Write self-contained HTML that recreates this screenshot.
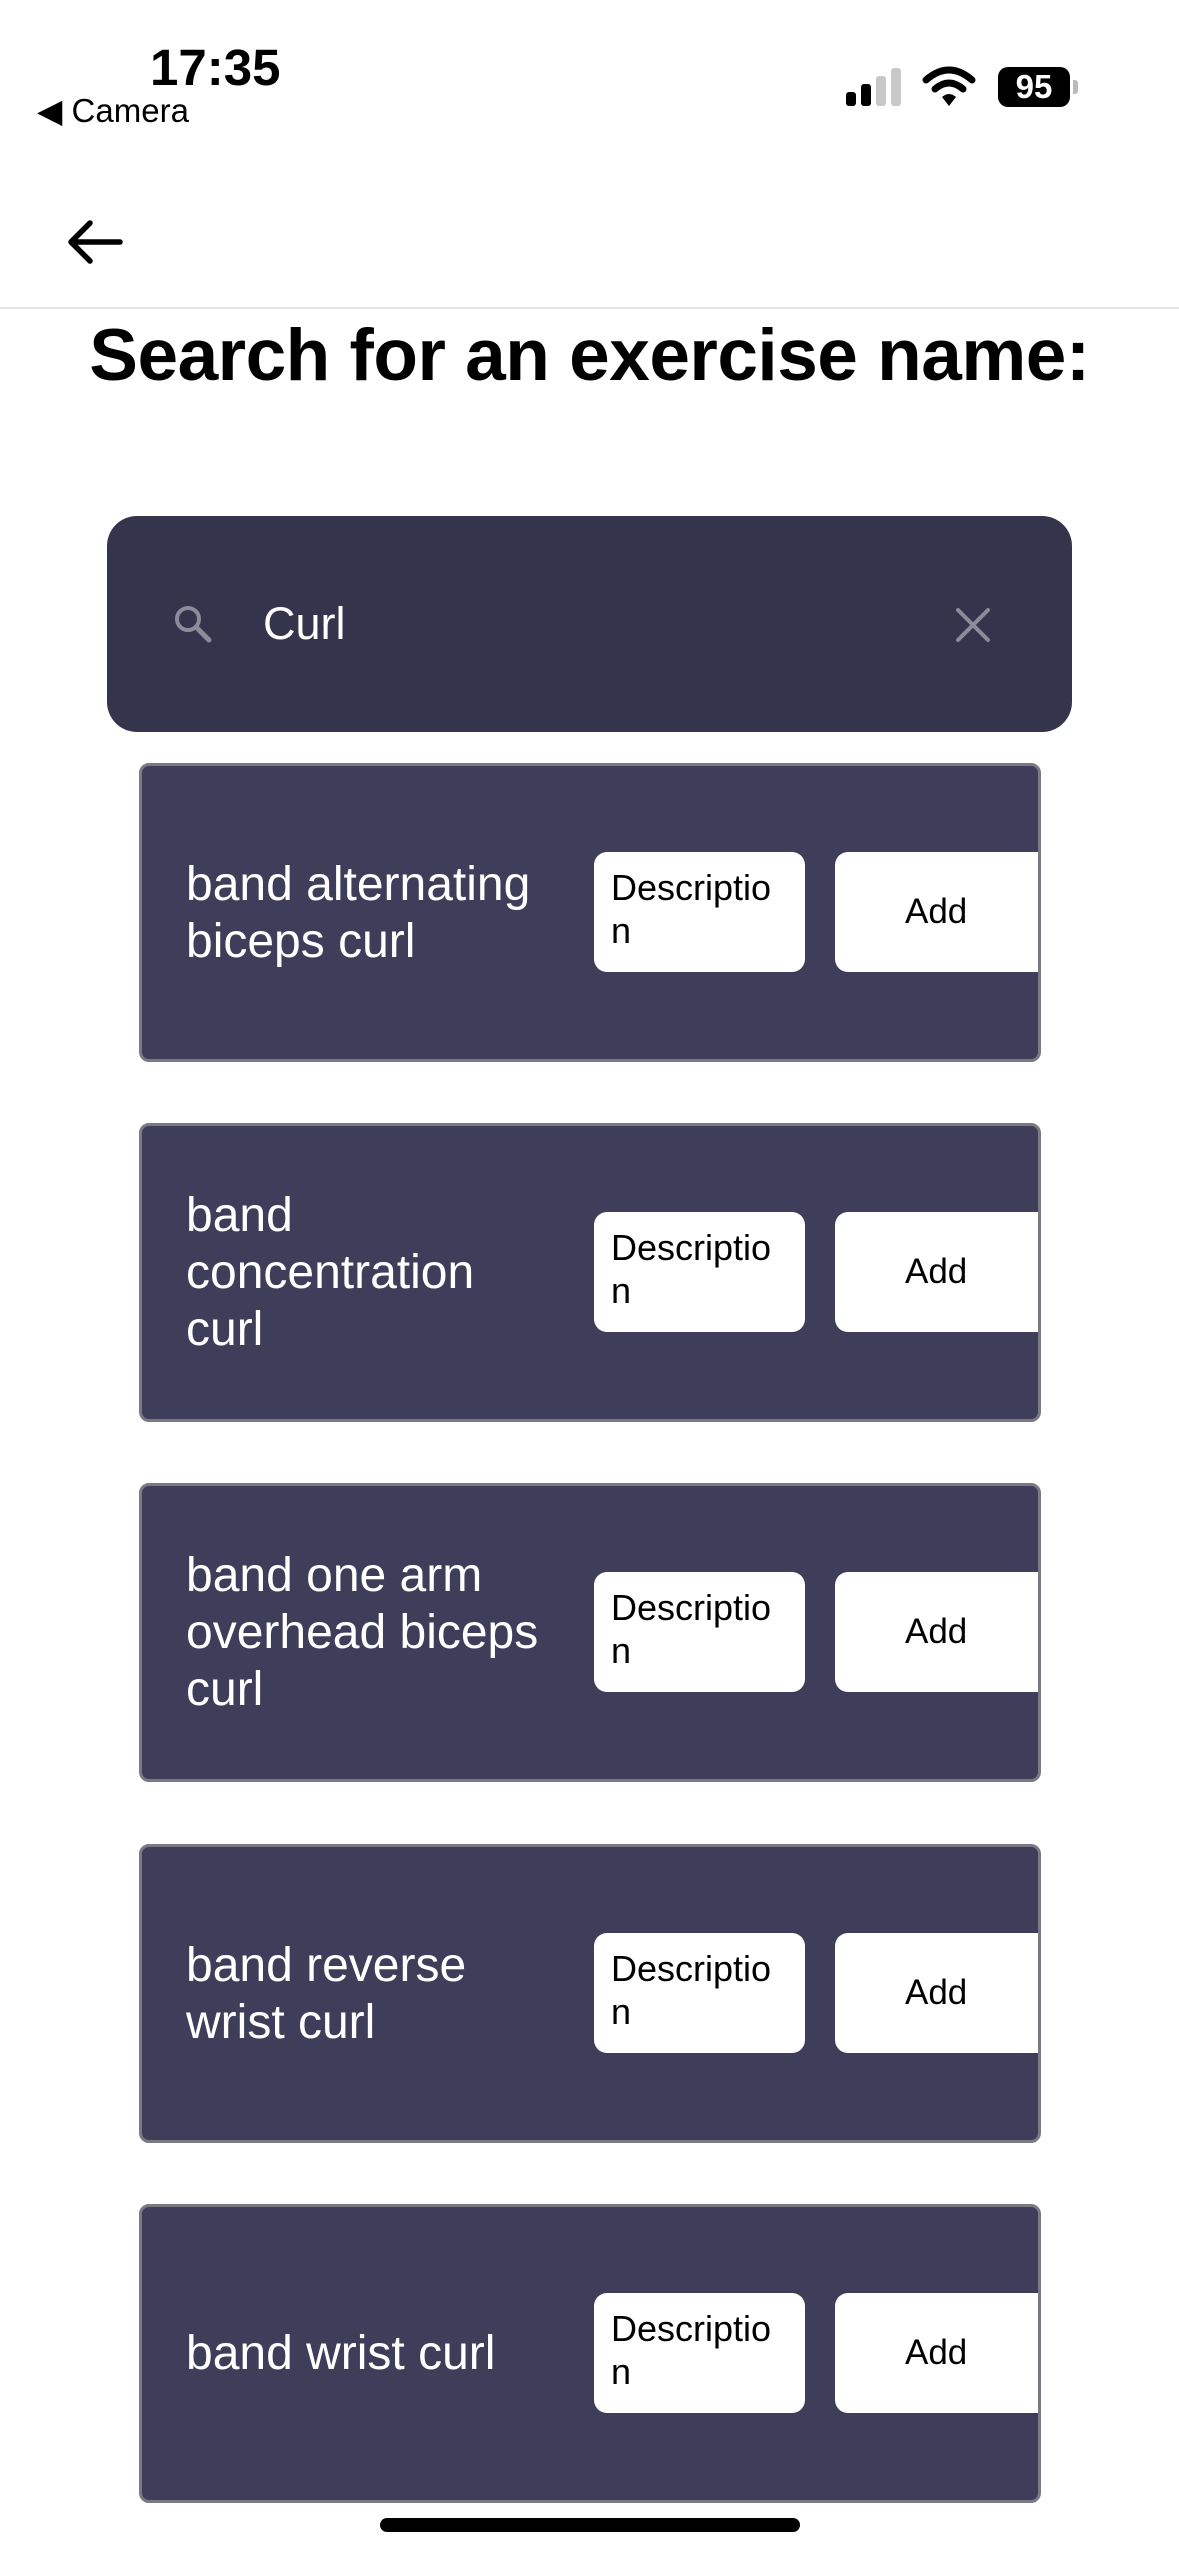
<!DOCTYPE html>
<html><head><meta charset="utf-8"><style>
*{margin:0;padding:0;box-sizing:border-box}
body{width:1179px;height:2556px;background:#fff;font-family:"Liberation Sans",sans-serif;position:relative;overflow:hidden}
.a{position:absolute}
.card{position:absolute;left:139px;width:902px;height:299px;background:#3f3e5a;border:3px solid #7a7a84;border-radius:10px;overflow:hidden}
.name{position:absolute;left:44px;top:0;height:293px;display:flex;align-items:center;color:#fff;font-size:48px;line-height:57px}
.desc{position:absolute;left:452px;top:86px;width:211px;height:120px;background:#fff;border-radius:13px;color:#000;font-size:36px;line-height:43px;padding:14px 0 0 17px}
.add{position:absolute;left:693px;top:86px;width:220px;height:120px;background:#fff;border-radius:13px;color:#000;font-size:35px;line-height:120px;padding-left:70px}
</style></head><body>
<div class="a" style="left:150px;top:38px;font-size:51px;font-weight:bold;color:#000">17:35</div>
<div class="a" style="left:37px;top:91px;font-size:33px;color:#000">◀ Camera</div>
<!-- signal -->
<div class="a" style="left:846px;top:92px;width:10px;height:14px;background:#000;border-radius:3px"></div>
<div class="a" style="left:861px;top:84px;width:10px;height:22px;background:#000;border-radius:3px"></div>
<div class="a" style="left:876px;top:76px;width:10px;height:30px;background:#c8c8c8;border-radius:3px"></div>
<div class="a" style="left:891px;top:68px;width:10px;height:38px;background:#c8c8c8;border-radius:3px"></div>
<svg class="a" style="left:922px;top:66px" width="54" height="42" viewBox="0 0 54 42"><path d="M4 14 Q27 -6 50 14" stroke="#000" stroke-width="7" fill="none" stroke-linecap="round"/><path d="M13 23 Q27 11 41 23" stroke="#000" stroke-width="7" fill="none" stroke-linecap="round"/><path d="M20 31 L27 40 L34 31 Q27 25 20 31Z" fill="#000"/></svg>
<div class="a" style="left:998px;top:67px;width:72px;height:40px;background:#000;border-radius:10px;color:#fff;font-size:33px;font-weight:bold;text-align:center;line-height:40px">95</div>
<div class="a" style="left:1073px;top:80px;width:5px;height:14px;background:#bbb;border-radius:0 3px 3px 0"></div>
<!-- back arrow -->
<svg class="a" style="left:66px;top:218px" width="58" height="48" viewBox="0 0 58 48"><path d="M54 24 H6 M24 5 L5 24 L24 43" stroke="#000" stroke-width="5.5" fill="none" stroke-linecap="round" stroke-linejoin="round"/></svg>
<div class="a" style="left:0;top:307px;width:1179px;height:2px;background:#e4e4e4"></div>
<div class="a" style="left:0;top:314px;width:1179px;text-align:center;font-size:73px;font-weight:bold;color:#000;letter-spacing:-0.5px">Search for an exercise name:</div>
<!-- search -->
<div class="a" style="left:107px;top:516px;width:965px;height:216px;background:#35344d;border-radius:30px"></div>
<svg class="a" style="left:172px;top:603px" width="42" height="42" viewBox="0 0 42 42"><circle cx="16" cy="16" r="11" stroke="#8b8b99" stroke-width="4" fill="none"/><path d="M24 24 L37 37" stroke="#8b8b99" stroke-width="5" stroke-linecap="round"/></svg>
<div class="a" style="left:263px;top:598px;font-size:45px;color:#fff">Curl</div>
<svg class="a" style="left:955px;top:607px" width="36" height="36" viewBox="0 0 36 36"><path d="M3 3 L33 33 M33 3 L3 33" stroke="#8b8b99" stroke-width="4" stroke-linecap="round"/></svg>

<div class="card" style="top:763px"><div class="name">band alternating<br>biceps curl</div><div class="desc">Descriptio<br>n</div><div class="add">Add</div></div>
<div class="card" style="top:1123px"><div class="name">band<br>concentration<br>curl</div><div class="desc">Descriptio<br>n</div><div class="add">Add</div></div>
<div class="card" style="top:1483px"><div class="name">band one arm<br>overhead biceps<br>curl</div><div class="desc">Descriptio<br>n</div><div class="add">Add</div></div>
<div class="card" style="top:1844px"><div class="name">band reverse<br>wrist curl</div><div class="desc">Descriptio<br>n</div><div class="add">Add</div></div>
<div class="card" style="top:2204px"><div class="name">band wrist curl</div><div class="desc">Descriptio<br>n</div><div class="add">Add</div></div>

<div class="a" style="left:380px;top:2518px;width:420px;height:14px;background:#000;border-radius:7px"></div>
</body></html>
